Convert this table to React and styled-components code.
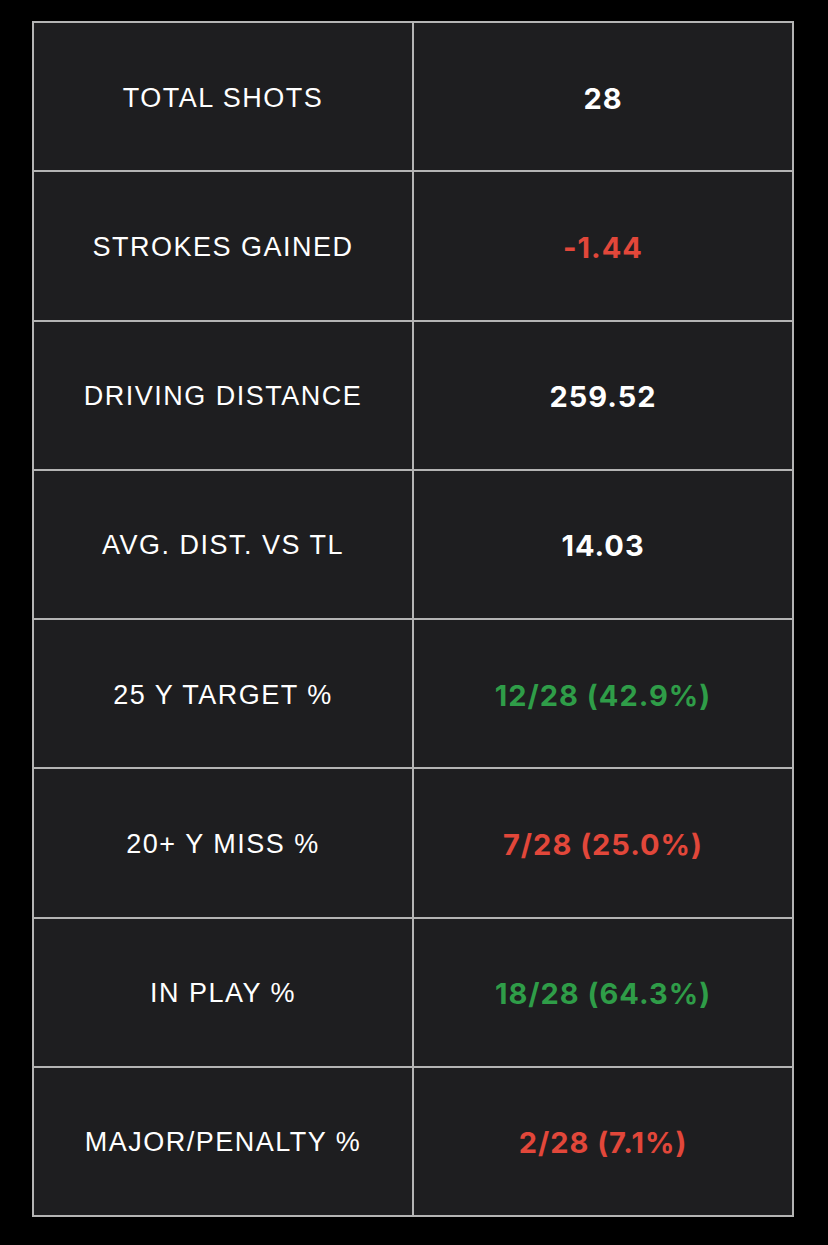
import { createGlobalStyle } from "styled-components"
import styled from "styled-components"

const GlobalStyle = createGlobalStyle`
  html, body {
    margin: 0;
    background: #000;
  }
`

const STATS = [
  { label: "TOTAL SHOTS", value: "28" },
  { label: "STROKES GAINED", value: "-1.44", tone: "bad" },
  { label: "DRIVING DISTANCE", value: "259.52" },
  { label: "AVG. DIST. VS TL", value: "14.03" },
  { label: "25 Y TARGET %", value: "12/28 (42.9%)", tone: "good" },
  { label: "20+ Y MISS %", value: "7/28 (25.0%)", tone: "bad" },
  { label: "IN PLAY %", value: "18/28 (64.3%)", tone: "good" },
  { label: "MAJOR/PENALTY %", value: "2/28 (7.1%)", tone: "bad" },
]

const TONES = {
  good: "#2f9d48",
  bad: "#e2473a",
}

export default function App() {
  return (
    <Page>
      <GlobalStyle />
      <StatsGrid>
        {STATS.map((stat) => (
          <Row key={stat.label}>
            <Label>{stat.label}</Label>
            <Value tone={stat.tone}>{stat.value}</Value>
          </Row>
        ))}
      </StatsGrid>
    </Page>
  )
}

const Page = styled.div`
  width: 828px;
  height: 1245px;
  padding: 21px 0 0 32px;
  box-sizing: border-box;
  background: #000;
`

const StatsGrid = styled.div`
  width: 762px;
  height: 1196px;
  box-sizing: border-box;
  display: grid;
  grid-template-rows: repeat(8, 1fr);
  gap: 2px;
  padding: 2px;
  background: #b4b4b4;
`

const Row = styled.div`
  display: grid;
  grid-template-columns: 378px 378px;
  gap: 2px;
`

const Cell = styled.div`
  display: flex;
  align-items: center;
  justify-content: center;
  padding-top: 3px;
  background: #1e1e20;
  color: #fff;
`

const Label = styled(Cell)`
  font-family: "Liberation Sans", Arial, sans-serif;
  font-size: 27px;
  letter-spacing: 1.5px;
`

const Value = styled(Cell)`
  font-family: Inter, "Noto Sans", sans-serif;
  font-weight: 700;
  font-size: 29px;
  letter-spacing: 1px;
  color: ${(p) => TONES[p.tone] || "#fff"};
`
